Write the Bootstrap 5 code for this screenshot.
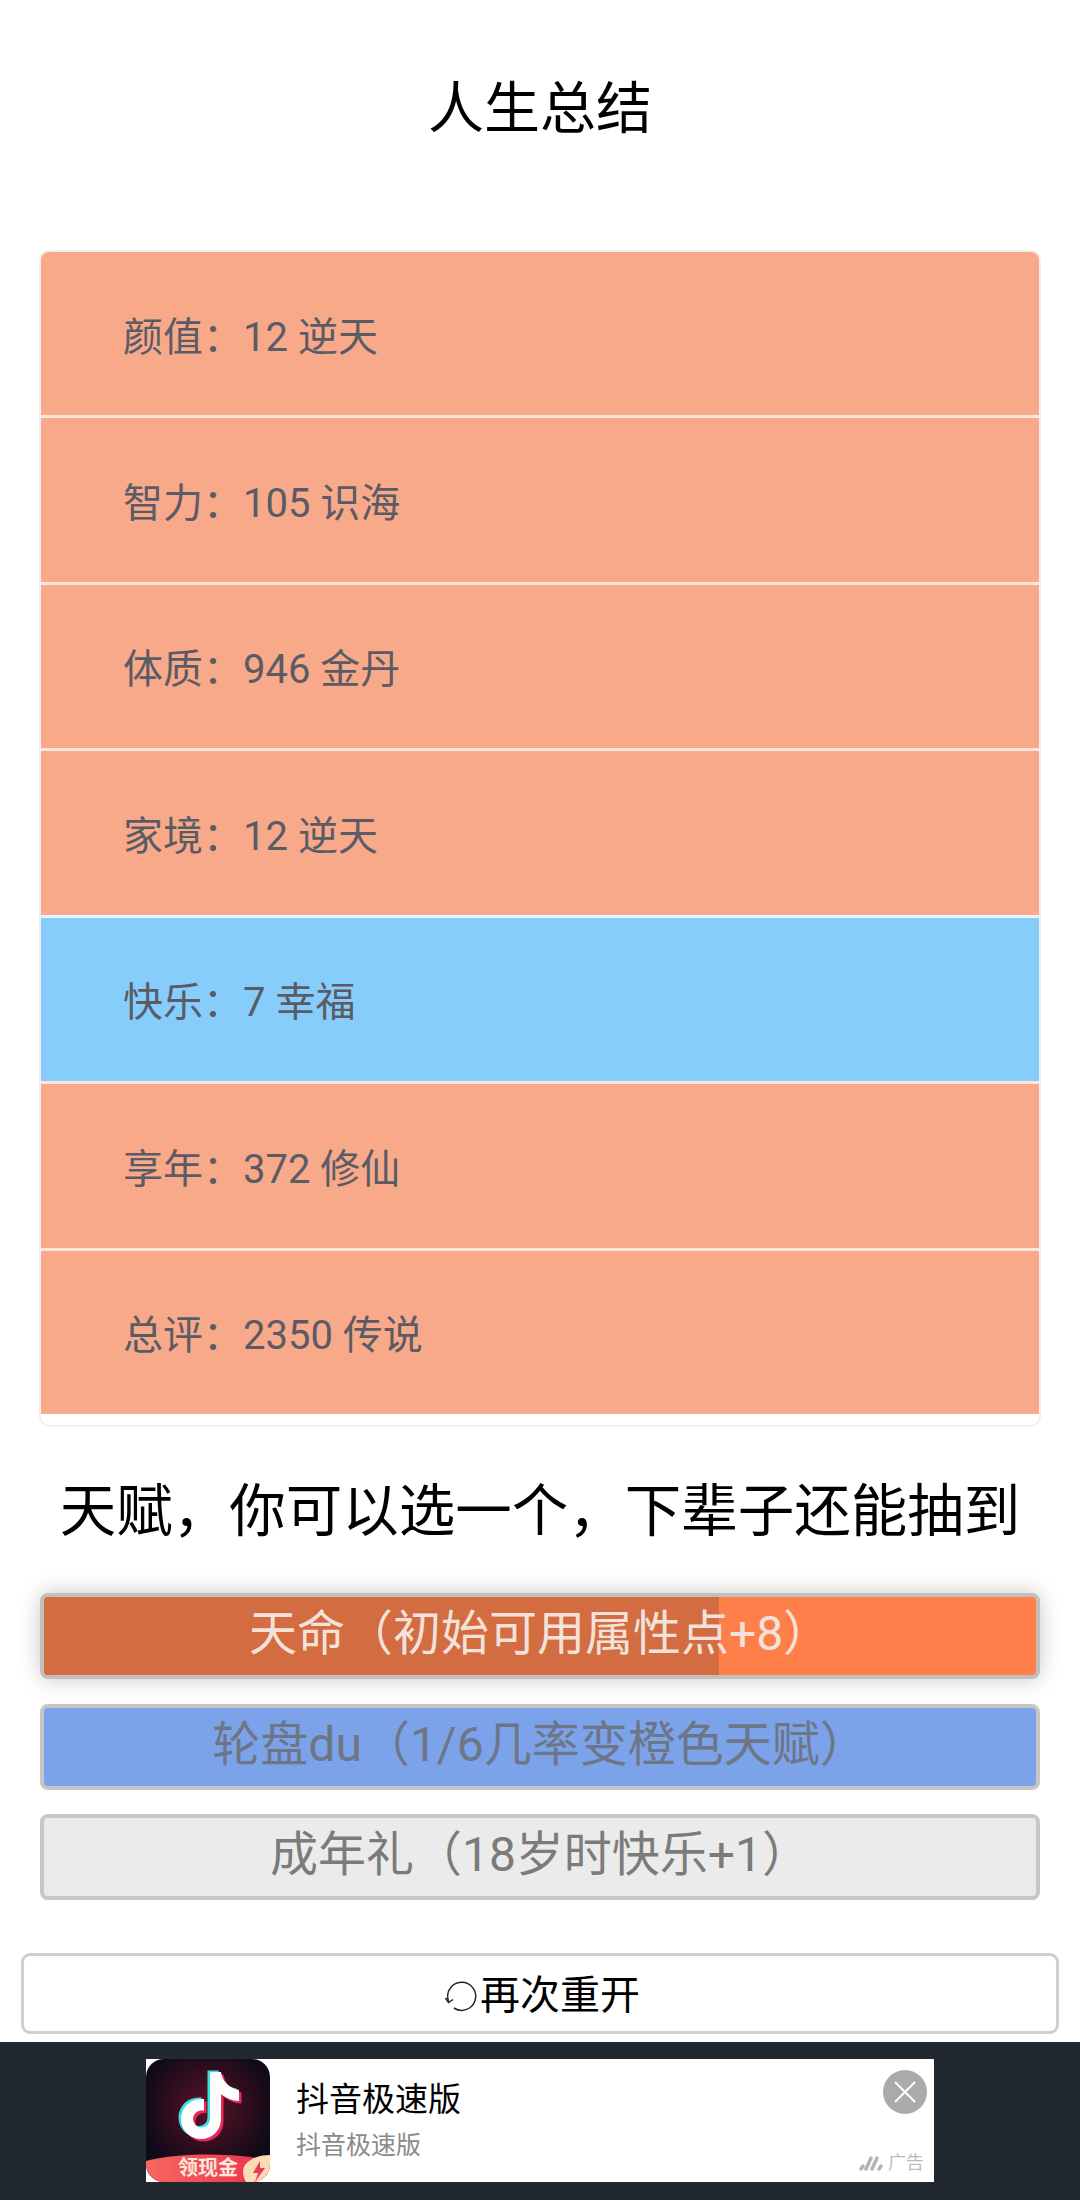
<!DOCTYPE html>
<html lang="zh">
  <head>
    <meta charset="utf-8" />
    <title>人生总结</title>
    <link href="https://cdn.jsdelivr.net/npm/bootstrap@5.3.3/dist/css/bootstrap.min.css" rel="stylesheet" />
    <style>
      body {
        font-family: Roboto, "Noto Sans CJK SC", sans-serif;
        color: #000;
        background: #fff;
      }
      .page-box { padding: 0 40px; }
      .page-title {
        font-family: inherit;
        font-size: 56px;
        line-height: 60px;
        font-weight: 400;
        padding-top: 79px;
        margin-bottom: 111px;
      }
      .stat-list {
        border: 2px solid #f2f0ee;
        border-radius: 10px;
        padding-bottom: 11px;
        margin: 0 -1px;
        overflow: hidden;
        background: #fff;
      }
      .stat-row {
        display: flex;
        align-items: center;
        height: 166.5px;
        padding: 8px 0 0 82px;
        font-size: 40px;
        color: #5b5b66;
        border-top: 3px solid #fbe4da;
      }
      .stat-row:first-child { height: 163px; border-top: 0; }
      .stat-orange { background: #f8a98a; }
      .stat-blue { background: #87cdfb; border-top-color: #e6f4fd; }
      .talent-title {
        font-family: inherit;
        font-size: 56.5px;
        line-height: 80px;
        font-weight: 400;
        margin: 45px 0 41px;
        white-space: nowrap;
      }
      .talent-btn {
        display: block;
        position: relative;
        width: 100%;
        height: 86px;
        margin-bottom: 24.5px;
        padding: 0 0 4px;
        border: 4px solid #c6c6c6;
        border-radius: 8px;
        font-size: 48px;
        line-height: 1.2;
        overflow: hidden;
      }
      .talent-label { position: relative; }
      .talent-fill {
        position: absolute;
        top: 0;
        bottom: 0;
        left: 0;
        background: #d36c41;
      }
      .talent-gold,
      .talent-gold:hover { background: #ff7f4b; color: #f3e2da; border-color: #c2bfbd; }
      .talent-blue,
      .talent-blue:hover { background: #7ca3ea; color: #6d7686; }
      .talent-grey,
      .talent-grey:hover { background: #ebebeb; color: #7b7b7b; }
      .talent-picked { box-shadow: 0 0 22px rgba(0, 0, 0, 0.22); }
      .restart-btn,
      .restart-btn:hover {
        display: flex;
        align-items: center;
        justify-content: center;
        height: 81px;
        margin: 53px 21px 8px;
        border: 3px solid #cfcfcf;
        border-radius: 9px;
        background: #fff;
        color: #000;
        font-size: 40px;
        line-height: 1;
        width: 1038px;
        padding: 0;
      }
      .restart-label { padding-top: 5px; }
      .ad-strip {
        background: #212830;
        padding: 17px 0 18px;
      }
      .ad-box {
        position: relative;
        width: 788px;
        height: 123px;
        background: #fff;
      }
      .ad-icon { display: block; flex: none; }
      .ad-name { font-size: 33px; line-height: 40px; margin-top: 21px; }
      .ad-sub { font-size: 25px; line-height: 30px; margin-top: 11px; color: #8a8a8a; }
      .ad-text { padding-left: 26px; }
      .ad-close { position: absolute; top: 11px; right: 7px; }
      .ad-mark {
        position: absolute;
        right: 10px;
        bottom: 7px;
        font-size: 18px;
        line-height: 24px;
        color: #bdbdbd;
      }
    </style>
  </head>
  <body>
    <main>
      <section class="page-box">
        <h1 class="page-title text-center">人生总结</h1>

        <ul class="list-unstyled stat-list mb-0" id="statList"></ul>

        <h2 class="talent-title text-center">天赋，你可以选一个，下辈子还能抽到</h2>

        <div id="talentList"></div>
      </section>

      <button type="button" class="btn restart-btn">
        <svg width="40" height="40" viewBox="0 0 40 40" fill="none" stroke="#222" stroke-width="1.5">
          <path d="M14 34A14 14 0 1 0 8.5 27" />
          <path d="M5.5 24L8.5 28.5L13 25.5" />
        </svg>
        <span class="restart-label">再次重开</span>
      </button>
    </main>

    <footer class="ad-strip">
      <div class="ad-box mx-auto d-flex">
        <svg class="ad-icon" width="124" height="123" viewBox="0 0 124 123">
          <defs>
            <radialGradient id="iconBg" cx="50%" cy="40%" r="55%">
              <stop offset="0" stop-color="#5c1226" />
              <stop offset="1" stop-color="#0f0a18" />
            </radialGradient>
            <linearGradient id="bandBg" x1="0" x2="1" y1="0" y2="0">
              <stop offset="0" stop-color="#f9675f" />
              <stop offset="1" stop-color="#e8304f" />
            </linearGradient>
            <clipPath id="iconClip"><rect width="124" height="123" rx="18" /></clipPath>
            <path id="noteShape" d="M64 13H75C76 22 84 30 93 31V42C86 42 80 39 75 35V60A20 20 0 1 1 55 40H58V51.5H55A8.5 8.5 0 1 0 64 60Z" />
          </defs>
          <g clip-path="url(#iconClip)">
            <rect width="124" height="123" fill="url(#iconBg)" />
            <use href="#noteShape" x="-2.5" y="-1.5" fill="#35e0e4" />
            <use href="#noteShape" x="2.5" y="2.5" fill="#e9285a" />
            <use href="#noteShape" fill="#fff" />
            <path d="M0 102C30 94 80 93 124 101V123H0Z" fill="url(#bandBg)" />
            <path d="M124 96C108 96 97 104 97 112C97 116 98 120 100 123H124Z" fill="#fbdcb4" />
            <path d="M114 102L107 114H112L109 123L119 109H114Z" fill="#ea3a55" />
            <text x="32" y="116" font-size="20" font-weight="700" fill="#fde8dc" font-family="'Noto Sans CJK SC', sans-serif">领现金</text>
          </g>
        </svg>
        <div class="ad-text">
          <div class="ad-name">抖音极速版</div>
          <div class="ad-sub">抖音极速版</div>
        </div>
        <svg class="ad-close" width="44" height="44" viewBox="0 0 44 44">
          <circle cx="22" cy="22" r="22" fill="#aaa" />
          <path d="M12 12L32 32M32 12L12 32" stroke="#fff" stroke-width="2" />
        </svg>
        <div class="ad-mark d-flex align-items-center">
          <svg width="26" height="16" viewBox="0 0 26 16" fill="none" stroke="#b4b4b4" stroke-width="3.5" stroke-linecap="round">
            <path d="M3 14L5 11M8 14L13 3M14 14L19 3M21 14L23 11" />
          </svg>
          <span class="ms-1">广告</span>
        </div>
      </div>
    </footer>

    <script>
      const statList = document.querySelector("#statList");
      const talentList = document.querySelector("#talentList");

      const stats = [
        { name: "颜值", value: "12 逆天", tone: "stat-orange" },
        { name: "智力", value: "105 识海", tone: "stat-orange" },
        { name: "体质", value: "946 金丹", tone: "stat-orange" },
        { name: "家境", value: "12 逆天", tone: "stat-orange" },
        { name: "快乐", value: "7 幸福", tone: "stat-blue" },
        { name: "享年", value: "372 修仙", tone: "stat-orange" },
        { name: "总评", value: "2350 传说", tone: "stat-orange" },
      ];

      const talents = [
        { label: "天命（初始可用属性点+8）", tone: "talent-gold talent-picked", fill: 68 },
        { label: "轮盘du（1/6几率变橙色天赋）", tone: "talent-blue" },
        { label: "成年礼（18岁时快乐+1）", tone: "talent-grey" },
      ];

      for (let i = 0; i < stats.length; i++) {
        const li = document.createElement("li");
        li.className = `stat-row ${stats[i].tone}`;
        li.textContent = `${stats[i].name}：${stats[i].value}`;
        statList.appendChild(li);
      }

      for (let i = 0; i < talents.length; i++) {
        const btn = document.createElement("button");
        btn.type = "button";
        btn.className = `btn talent-btn ${talents[i].tone}`;

        if (talents[i].fill) {
          const fill = document.createElement("span");
          fill.className = "talent-fill";
          fill.style.width = `${talents[i].fill}%`;
          btn.appendChild(fill);
        }

        const label = document.createElement("span");
        label.className = "talent-label";
        label.textContent = talents[i].label;
        btn.appendChild(label);
        talentList.appendChild(btn);
      }
    </script>
    <script src="https://cdn.jsdelivr.net/npm/bootstrap@5.3.3/dist/js/bootstrap.bundle.min.js"></script>
  </body>
</html>
